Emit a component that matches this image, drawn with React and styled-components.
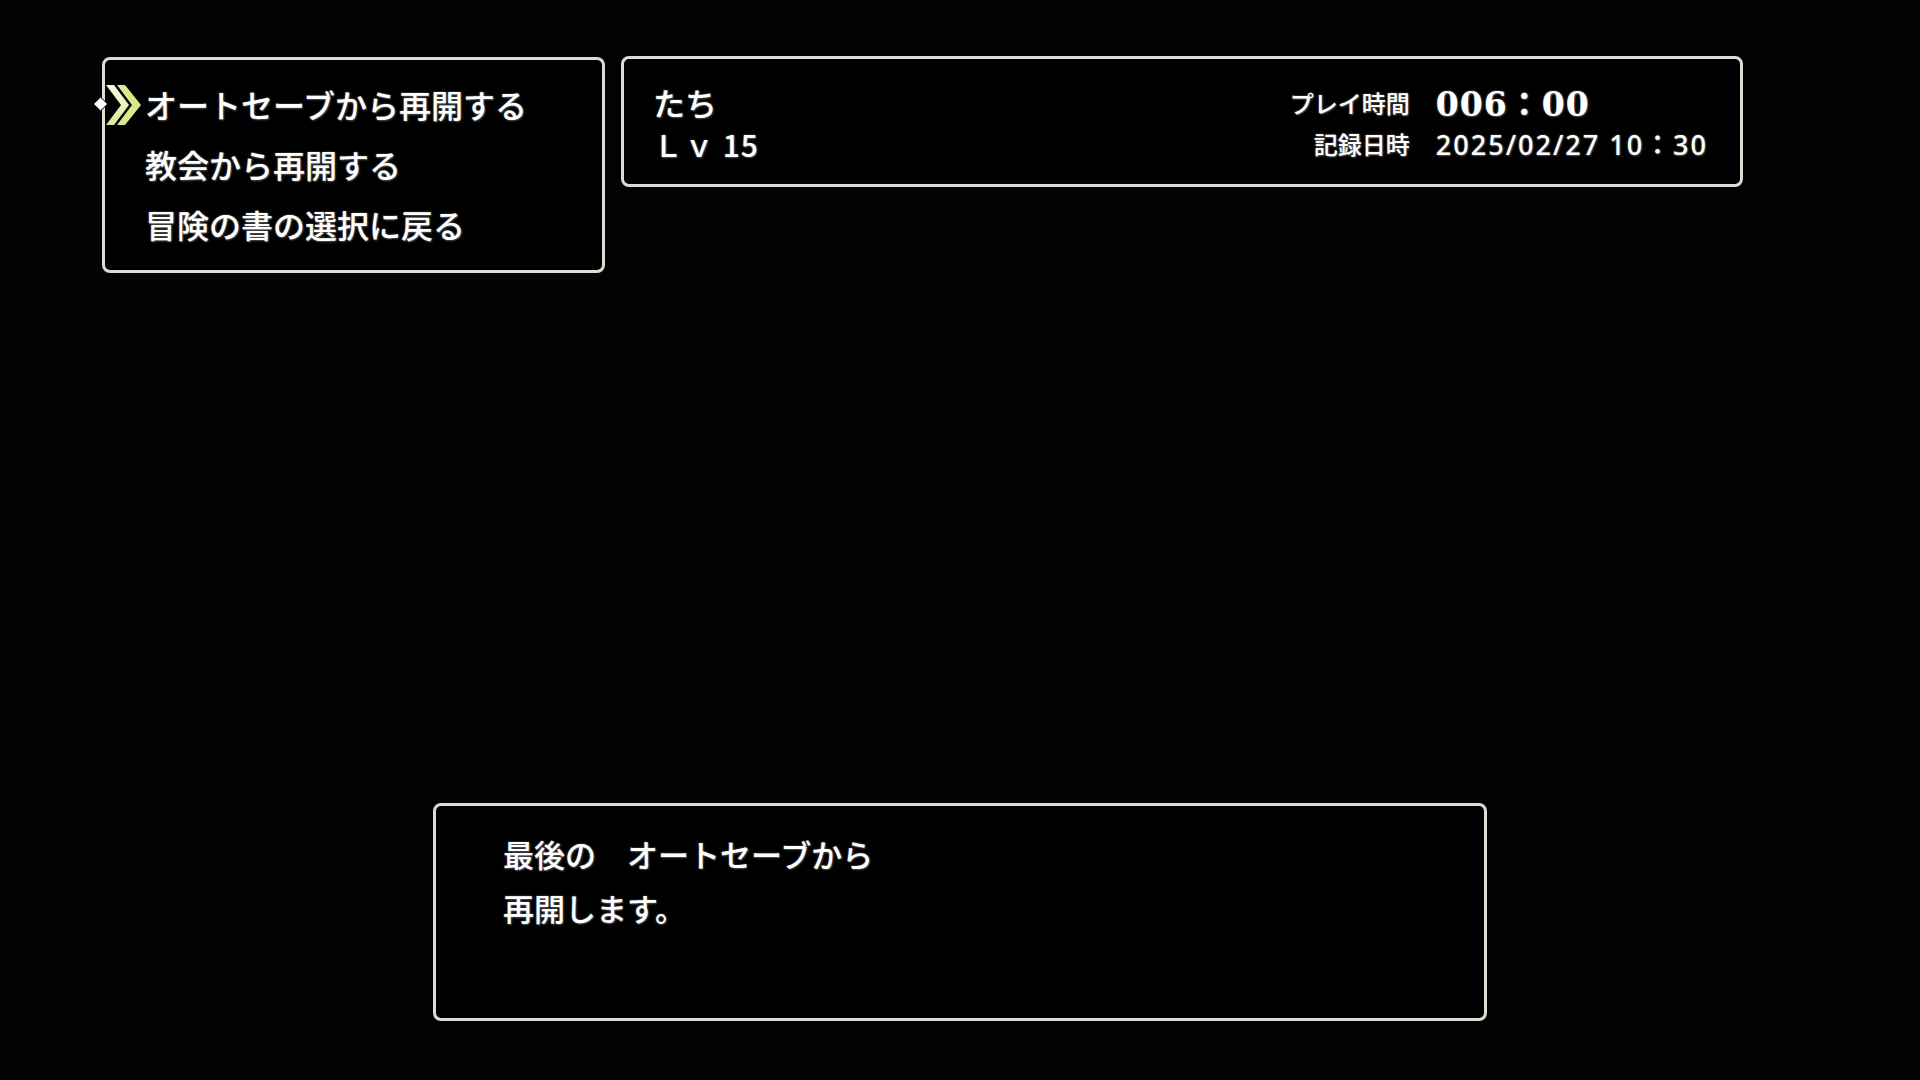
import React from 'react';
import styled, { createGlobalStyle } from 'styled-components';

const GlobalStyle = createGlobalStyle`
  html, body {
    margin: 0;
    padding: 0;
    background: #030306;
  }
  body {
    font-family: "Noto Sans CJK JP", "Noto Sans", sans-serif;
    color: #fff;
  }
`;

const menuItems = ['オートセーブから再開する', '教会から再開する', '冒険の書の選択に戻る'];

const Cursor = () => (
  <CursorMark width="50" height="46" viewBox="-1 -1 50 46">
    <defs>
      <linearGradient id="chev" x1="0" y1="0" x2="0" y2="1">
        <stop offset="0" stopColor="#fafbe6" />
        <stop offset="1" stopColor="#dbe895" />
      </linearGradient>
    </defs>
    <g stroke="#000" strokeWidth="1.5" strokeLinejoin="round" paintOrder="stroke">
      <polygon points="0,21 6.5,14.5 13,21 6.5,27.5" fill="#ffffff" />
      <polygon points="23,2 31,2 47,22 31,42 23,42 38,22" fill="#dae98c" />
      <polygon points="12,2 20,2 35,22 20,42 12,42 27,22" fill="url(#chev)" />
    </g>
  </CursorMark>
);

const App = () => (
  <Screen>
    <GlobalStyle />
    <TopRow>
      <MenuBox>
        {menuItems.map((label, i) => (
          <MenuItem key={label}>
            {i === 0 && <Cursor />}
            {label}
          </MenuItem>
        ))}
      </MenuBox>
      <InfoBox>
        <HeroColumn>
          <HeroName>たち</HeroName>
          <HeroLevel>Ｌｖ 15</HeroLevel>
        </HeroColumn>
        <StatsGrid>
          <StatLabel>プレイ時間</StatLabel>
          <PlayTime>006：00</PlayTime>
          <StatLabel>記録日時</StatLabel>
          <SavedAt>2025/02/27 10：30</SavedAt>
        </StatsGrid>
      </InfoBox>
    </TopRow>
    <MessageBox>
      最後の　オートセーブから
      <br />
      再開します。
    </MessageBox>
  </Screen>
);

export default App;

const glow = `
  text-shadow: 0 0 2px rgba(120, 120, 120, 0.9), 1px 1px 2px rgba(70, 70, 70, 0.9);
`;

const Screen = styled.div`
  min-height: 100vh;
  box-sizing: border-box;
  display: flex;
  flex-direction: column;
  padding-top: 57px;
`;

const TopRow = styled.div`
  display: flex;
  align-items: flex-start;
  gap: 16px;
  padding-left: 102px;
`;

const Frame = styled.div`
  box-sizing: border-box;
  border: 3px solid #dedbd2;
  border-radius: 8px;
  background: #000;
`;

const MenuBox = styled(Frame)`
  width: 503px;
  height: 216px;
  padding: 14px 0 0 40px;
`;

const MenuItem = styled.div`
  position: relative;
  height: 60px;
  line-height: 60px;
  font-size: 32px;
  font-weight: 500;
  white-space: nowrap;
  ${glow}
`;

const CursorMark = styled.svg`
  position: absolute;
  left: -52px;
  top: 8px;
`;

const InfoBox = styled(Frame)`
  width: 1122px;
  height: 131px;
  margin-top: -1px;
  display: flex;
  justify-content: space-between;
  align-items: center;
  padding: 2px 32px 0 29px;
`;

const HeroColumn = styled.div`
  display: flex;
  flex-direction: column;
`;

const HeroName = styled.div`
  height: 42px;
  line-height: 42px;
  font-size: 32px;
  font-weight: 500;
  ${glow}
`;

const HeroLevel = styled.div`
  height: 42px;
  line-height: 42px;
  font-size: 30px;
  font-weight: 500;
  letter-spacing: 1px;
  ${glow}
`;

const StatsGrid = styled.div`
  display: grid;
  grid-template-columns: auto auto;
  grid-auto-rows: 41px;
  column-gap: 26px;
  align-items: center;
`;

const StatLabel = styled.div`
  text-align: right;
  font-size: 24px;
  font-weight: 500;
  ${glow}
`;

const PlayTime = styled.div`
  font-family: "DejaVu Serif", "Noto Sans CJK JP", serif;
  font-size: 33px;
  font-weight: 700;
  letter-spacing: 1px;
  ${glow}
`;

const SavedAt = styled.div`
  font-family: "Noto Sans", "Noto Sans CJK JP", sans-serif;
  font-size: 27px;
  font-weight: 500;
  letter-spacing: 2px;
  ${glow}
`;

const MessageBox = styled(Frame)`
  width: 1054px;
  height: 218px;
  margin: 530px auto 0;
  padding: 21px 67px;
  font-size: 31px;
  font-weight: 500;
  line-height: 54px;
  ${glow}
`;
